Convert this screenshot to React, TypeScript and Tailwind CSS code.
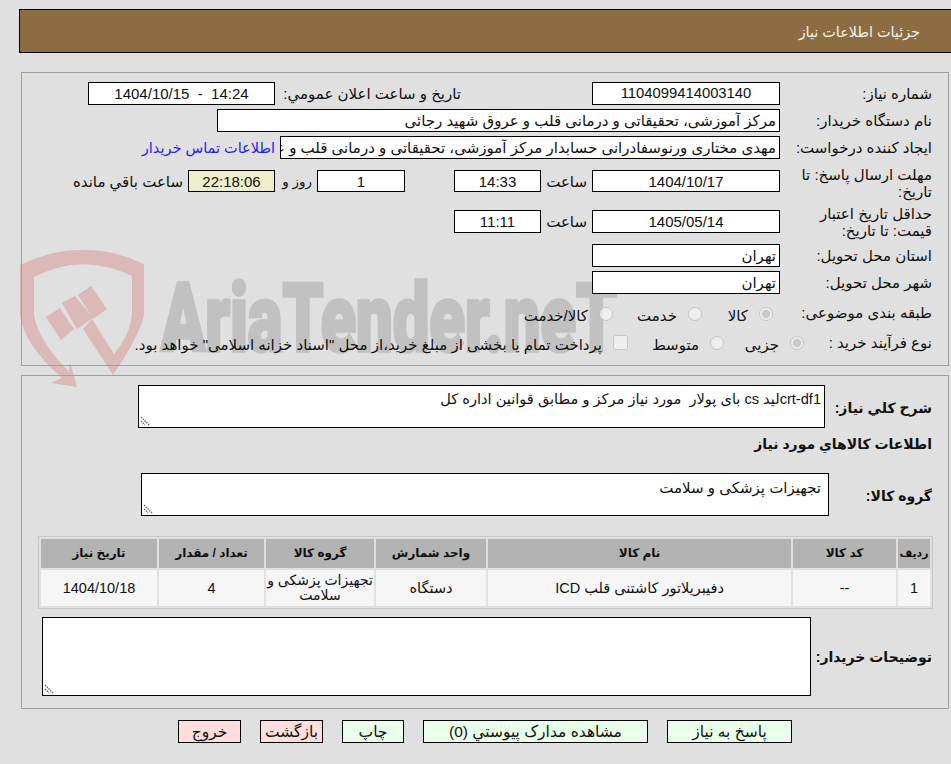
import React from 'react';

const Field = ({ children, className = '' }: { children?: React.ReactNode; className?: string }) => (
  <div className={`h-[23px] shrink-0 border border-black bg-white px-[3px] leading-[21px] whitespace-nowrap overflow-hidden ${className}`}>
    {children}
  </div>
);

const Grip = () => (
  <svg className="absolute left-[1px] bottom-[1px]" width="10" height="10" viewBox="0 0 10 10">
    <path d="M1 1 L9 9 M1 5 L5 9" stroke="#666" strokeWidth="1.4" strokeDasharray="1.5 1" fill="none" />
  </svg>
);

const Area = ({ children, className = '' }: { children?: React.ReactNode; className?: string }) => (
  <div className={`relative shrink-0 border border-black bg-white pl-[3px] pt-[5px] ${className}`}>
    {children}
    <Grip />
  </div>
);

const Row = ({ label, className = '', children, labelClass = '' }: { label: string; className?: string; children?: React.ReactNode; labelClass?: string }) => (
  <div className={`flex items-start ${className}`}>
    <div className={`w-[152px] shrink-0 ${labelClass}`}>
      <div className="w-[145px]">{label}</div>
    </div>
    {children}
  </div>
);

const Choice = ({ text, checked, className = '' }: { text: string; checked?: boolean; className?: string }) => (
  <div className={`flex items-center shrink-0 ${className}`}>
    <input type="radio" disabled checked={checked} readOnly className="m-0 w-[14px] h-[14px] shrink-0" />
    <span className="mr-[11px] mt-[3px]">{text}</span>
  </div>
);

const Btn = ({ text, red, className = '' }: { text: string; red?: boolean; className?: string }) => (
  <button className={`h-[23px] border border-black text-center text-[15.5px] leading-[21px] ${red ? 'bg-[#ffdddd]' : 'bg-[#eaffea]'} ${className}`}>{text}</button>
);

const th = 'bg-[#b3b3b3] font-bold text-[12px] h-[29px] p-0 text-center';
const td = 'bg-[#f6f6f6] text-[14.5px] h-[36px] p-0 text-center leading-[15px]';

const Watermark = () => (
  <svg className="absolute left-0 top-0 pointer-events-none" width="951" height="764" viewBox="0 0 951 764">
    <g fill="#dbb9b9">
      <path d="M20 265 Q82 235 144 264 L144 315 Q140 335 113 375 L83 329 L92 319 L114 354 Q130 335 132 315 L132 276 Q82 252 34 277 L34 315 Q38 340 69 372 L70 362 L77 387 L51 383 L62 378 Q24 345 20 315 Z" />
      <path d="M46 317 L60 308 L74 329 L61 340 Z" />
      <path d="M62 303 L75 296 L93 318 L77 329 Z" />
      <path d="M78 295 L91 286 L107 309 L93 319 Z" />
    </g>
    <text x="161" y="351" direction="ltr" textAnchor="start" fill="#c1c1c1" stroke="#c1c1c1" strokeWidth="3.5" fontFamily="Roboto" fontWeight="900" fontSize="94" textLength="456" lengthAdjust="spacingAndGlyphs">AriaTender.neT</text>
  </svg>
);

export default function App() {
  return (
    <div dir="rtl" className="relative h-[764px] w-[951px] overflow-hidden bg-[#e0e0e0] pt-[9px] text-[15px] leading-[17px] text-[#111]" style={{ fontFamily: '"Liberation Sans", "DejaVu Sans", sans-serif' }}>
      <Watermark />
      <div className="relative">
        <div className="ml-[19px] h-[44px] border-y border-l border-black bg-[#8c6d42] pr-[31px] pt-[14px] text-[14.4px] text-[#f2f2f2]">
          جزئیات اطلاعات نیاز
        </div>

        <div className="ml-[21px] mr-[2px] mt-[19px] h-[294px] border border-[#a0a0a0] pr-[16px] pt-[9px]">
          <Row label="شماره نیاز:" labelClass="pt-[3px]">
            <Field className="w-[188px] text-center text-[14.8px]">1104099414003140</Field>
            <div className="mr-[131px] w-[186px] shrink-0 pt-[3px] whitespace-nowrap">تاریخ و ساعت اعلان عمومي:</div>
            <Field className="w-[187px] text-center !whitespace-pre">{'14:24  -  1404/10/15'}</Field>
          </Row>
          <Row label="نام دستگاه خریدار:" className="mt-[4px]" labelClass="pt-[3px]">
            <Field className="w-[563px]">مرکز آموزشی، تحقیقاتی و درمانی قلب و عروق شهید رجائی</Field>
          </Row>
          <Row label="ایجاد کننده درخواست:" className="mt-[4px]" labelClass="pt-[3px]">
            <Field className="w-[500px]">مهدی مختاری ورنوسفادرانی حسابدار مرکز آموزشی، تحقیقاتی و درمانی قلب و عروق شهید رجائی</Field>
            <a className="mr-[5px] pt-[4px] text-[14.5px] text-[#2222ff] whitespace-nowrap">اطلاعات تماس خریدار</a>
          </Row>
          <Row label="مهلت ارسال پاسخ: تا تاریخ:" className="mt-[11px] h-[22px]" labelClass="-mt-[4px]">
            <Field className="w-[188px] !h-[22px] text-center leading-[20px]">1404/10/17</Field>
            <div className="mr-[5px] w-[46px] shrink-0 pt-[3px]">ساعت</div>
            <Field className="w-[87px] !h-[22px] text-center leading-[20px]">14:33</Field>
            <div className="w-[49px] shrink-0"></div>
            <Field className="w-[88px] !h-[22px] text-center leading-[20px]">1</Field>
            <div className="mr-[5px] w-[37px] shrink-0 pt-[3px] text-[13.5px] whitespace-nowrap">روز و</div>
            <Field className="w-[87px] !h-[22px] text-center leading-[20px] !bg-[#eeeecc]">22:18:06</Field>
            <div className="mr-[5px] pt-[3px] whitespace-nowrap">ساعت باقي مانده</div>
          </Row>
          <Row label="حداقل تاریخ اعتبار قیمت: تا تاریخ:" className="mt-[18px] h-[23px]" labelClass="-mt-[5px]">
            <Field className="w-[188px] text-center">1405/05/14</Field>
            <div className="mr-[5px] w-[46px] shrink-0 pt-[3px]">ساعت</div>
            <Field className="w-[87px] text-center">11:11</Field>
          </Row>
          <Row label="استان محل تحویل:" className="mt-[11px]" labelClass="pt-[3px]">
            <Field className="w-[188px]">تهران</Field>
          </Row>
          <Row label="شهر محل تحویل:" className="mt-[4px]" labelClass="pt-[3px]">
            <Field className="w-[188px]">تهران</Field>
          </Row>
          <Row label="طبقه بندی موضوعی:" className="mt-[10px] h-[17px] items-center">
            <div className="flex pr-[7px]">
              <Choice text="کالا" checked className="w-[71px]" />
              <Choice text="خدمت" className="w-[89px]" />
              <Choice text="کالا/خدمت" />
            </div>
          </Row>
          <div className="mt-[13px] flex h-[17px] items-center">
            <div className="w-[128px] shrink-0">نوع فرآیند خرید :</div>
            <Choice text="جزیی" checked className="w-[80px]" />
            <Choice text="متوسط" className="w-[96px]" />
            <input type="checkbox" disabled readOnly className="m-0 h-[15px] w-[15px] shrink-0" />
            <span className="mr-[11px] mt-[3px] whitespace-nowrap">پرداخت تمام یا بخشی از مبلغ خرید،از محل "اسناد خزانه اسلامی" خواهد بود.</span>
          </div>
        </div>

        <div className="ml-[21px] mr-[2px] mt-[9px] h-[334px] border border-[#a0a0a0] pt-[9px]">
          <div className="flex items-start pr-[16px]">
            <div className="w-[107px] shrink-0 pt-[15px] font-bold text-[14px]">شرح كلي نياز:</div>
            <Area className="h-[43px] w-[687px] pr-[3px] text-[14.6px] whitespace-pre">crt-df1لید cs بای پولار  مورد نیاز مرکز و مطابق قوانین اداره کل</Area>
          </div>
          <div className="mt-[8px] pr-[16px] font-bold text-[14px]">اطلاعات كالاهاي مورد نياز</div>
          <div className="mt-[20px] flex items-start pr-[16px]">
            <div className="w-[103px] shrink-0 pt-[15px] font-bold text-[14px]">گروه کالا:</div>
            <Area className="h-[43px] w-[688px] pr-[7px]">تجهیزات پزشکی و سلامت</Area>
          </div>
          <div className="mt-[20px] ml-[16px] mr-[15px]">
            <table className="w-[895px] table-fixed border border-[#c8c8c8] border-separate border-spacing-[2px]">
              <thead>
                <tr>
                  <th className={`${th} w-[32px] !text-[11px]`}>ردیف</th>
                  <th className={`${th} w-[103px]`}>کد کالا</th>
                  <th className={`${th} w-[303px]`}>نام کالا</th>
                  <th className={`${th} w-[110px]`}>واحد شمارش</th>
                  <th className={`${th} w-[108px]`}>گروه کالا</th>
                  <th className={`${th} w-[105px]`}>تعداد / مقدار</th>
                  <th className={th}>تاریخ نیاز</th>
                </tr>
              </thead>
              <tbody>
                <tr>
                  <td className={td}>1</td>
                  <td className={td}>--</td>
                  <td className={td}>دفیبریلاتور کاشتنی قلب ICD</td>
                  <td className={td}>دستگاه</td>
                  <td className={`${td} !text-[14px] whitespace-nowrap`}>تجهیزات پزشکی و<br />سلامت</td>
                  <td className={td}>4</td>
                  <td className={td}>1404/10/18</td>
                </tr>
              </tbody>
            </table>
          </div>
          <div className="mt-[8px] flex items-start pr-[16px]">
            <div className="w-[121px] shrink-0 pt-[32px] font-bold text-[14px]">توضیحات خریدار:</div>
            <Area className="h-[79px] w-[769px]" />
          </div>
        </div>

        <div className="mt-[11px] flex gap-[19px] pr-[159px]">
          <Btn text="پاسخ به نیاز" className="w-[125px]" />
          <Btn text="مشاهده مدارک پیوستي (0)" className="w-[225px]" />
          <Btn text="چاپ" className="w-[62px]" />
          <Btn text="بازگشت" red className="w-[63px]" />
          <Btn text="خروج" red className="w-[63px]" />
        </div>
      </div>
    </div>
  );
}
